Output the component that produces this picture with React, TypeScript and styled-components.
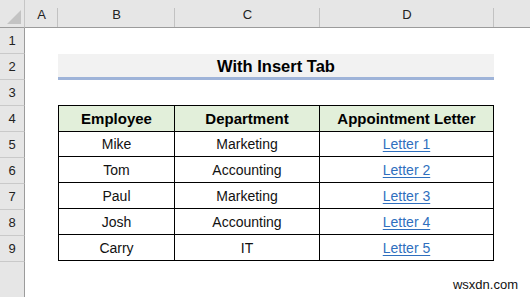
import { Fragment } from "react";
import { styled, createGlobalStyle } from "styled-components";

const GlobalStyle = createGlobalStyle`
  html, body {
    margin: 0;
    padding: 0;
    background: #ffffff;
  }
  body {
    font-family: "Liberation Sans", Arial, sans-serif;
  }
`;

const COLUMNS = ["A", "B", "C", "D"];
const ROWS = [1, 2, 3, 4, 5, 6, 7, 8, 9];

const DATA = [
  { name: "Mike", dept: "Marketing", letter: "Letter 1" },
  { name: "Tom", dept: "Accounting", letter: "Letter 2" },
  { name: "Paul", dept: "Marketing", letter: "Letter 3" },
  { name: "Josh", dept: "Accounting", letter: "Letter 4" },
  { name: "Carry", dept: "IT", letter: "Letter 5" },
];

function App() {
  return (
    <>
      <GlobalStyle />
      <Sheet>
        <Corner>
          <svg width="14" height="14" viewBox="0 0 14 14">
            <polygon points="14,0 14,14 0,14" fill="#c3c3c3" />
          </svg>
        </Corner>
        {COLUMNS.map((c) => (
          <ColHead key={c}>{c}</ColHead>
        ))}
        <ColHead $last />

        {ROWS.map((r) => (
          <RowHead key={r} $row={r + 1}>
            {r}
          </RowHead>
        ))}
        <RowFiller />

        <Title>With Insert Tab</Title>

        <Table>
          <HeadCell $first>Employee</HeadCell>
          <HeadCell>Department</HeadCell>
          <HeadCell>Appointment Letter</HeadCell>

          {DATA.map((d) => (
            <Fragment key={d.letter}>
              <Cell $first>{d.name}</Cell>
              <Cell>{d.dept}</Cell>
              <Cell>
                <Link>{d.letter}</Link>
              </Cell>
            </Fragment>
          ))}
        </Table>

        <Watermark>wsxdn.com</Watermark>
      </Sheet>
    </>
  );
}

const Sheet = styled("div")`
  position: relative;
  width: 530px;
  height: 297px;
  overflow: hidden;
  display: grid;
  grid-template-columns: 25px 33px 117px 145px 174px 1fr;
  grid-template-rows: 28px repeat(9, 26px) 1fr;
  background: #ffffff;
`;

const Corner = styled("div")`
  grid-row: 1;
  grid-column: 1;
  background: #e6e6e6;
  border-bottom: 1px solid #9b9b9b;
  border-right: 1px solid #c6c6c6;
  display: flex;
  align-items: flex-end;
  justify-content: flex-end;
  padding: 0 3px 3px 0;
  box-sizing: border-box;
`;

const ColHead = styled("div")<{ $last?: boolean }>`
  grid-row: 1;
  position: relative;
  background: #e6e6e6;
  border-bottom: 1px solid #9b9b9b;
  display: flex;
  align-items: flex-end;
  justify-content: center;
  padding-bottom: 5px;
  box-sizing: border-box;
  font-size: 13px;
  color: #222;
  &::after {
    content: "";
    display: ${(p) => (p.$last ? "none" : "block")};
    position: absolute;
    right: 0;
    top: 8px;
    bottom: 0;
    width: 1px;
    background: #c2c2c2;
  }
`;

const RowHead = styled("div")<{ $row: number }>`
  grid-column: 1;
  grid-row: ${(p) => p.$row};
  background: #e6e6e6;
  border-right: 1px solid #9b9b9b;
  border-bottom: 1px solid #c9c9c9;
  box-sizing: border-box;
  display: flex;
  align-items: center;
  justify-content: center;
  font-size: 13px;
  color: #222;
`;

const RowFiller = styled("div")`
  grid-column: 1;
  grid-row: 11;
  background: #e6e6e6;
  border-right: 1px solid #9b9b9b;
`;

const Title = styled("div")`
  grid-row: 3;
  grid-column: 3 / 6;
  background: #f2f2f2;
  border-bottom: 3px solid #9fb4d9;
  box-sizing: border-box;
  display: flex;
  align-items: center;
  justify-content: center;
  font-size: 16.5px;
  font-weight: bold;
  color: #000;
  padding-top: 2px;
`;

const Table = styled("div")`
  grid-row: 5 / 11;
  grid-column: 3 / 6;
  display: grid;
  grid-template-columns: 117px 145px 174px;
  grid-template-rows: repeat(6, 26px);
  margin-top: -1px;
`;

const HeadCell = styled("div")<{ $first?: boolean }>`
  background: #e2efda;
  border-top: 1px solid #000;
  border-right: 1px solid #000;
  border-bottom: 1px solid #000;
  border-left: ${(p) => (p.$first ? "1px solid #000" : "none")};
  box-sizing: border-box;
  display: flex;
  align-items: center;
  justify-content: center;
  font-size: 15px;
  font-weight: bold;
  color: #000;
  height: 27px;
`;

const Cell = styled("div")<{ $first?: boolean }>`
  border-right: 1px solid #000;
  border-bottom: 1px solid #000;
  border-left: ${(p) => (p.$first ? "1px solid #000" : "none")};
  box-sizing: border-box;
  display: flex;
  align-items: center;
  justify-content: center;
  font-size: 14px;
  color: #111;
  padding-top: 1px;
`;

const Link = styled("span")`
  color: #2f6fbe;
  text-decoration: underline;
  text-underline-offset: 2px;
`;

const Watermark = styled("div")`
  position: absolute;
  right: 12px;
  bottom: 5px;
  font-family: "Liberation Sans", Arial, sans-serif;
  font-size: 13px;
  color: #111;
`;

export default App;
